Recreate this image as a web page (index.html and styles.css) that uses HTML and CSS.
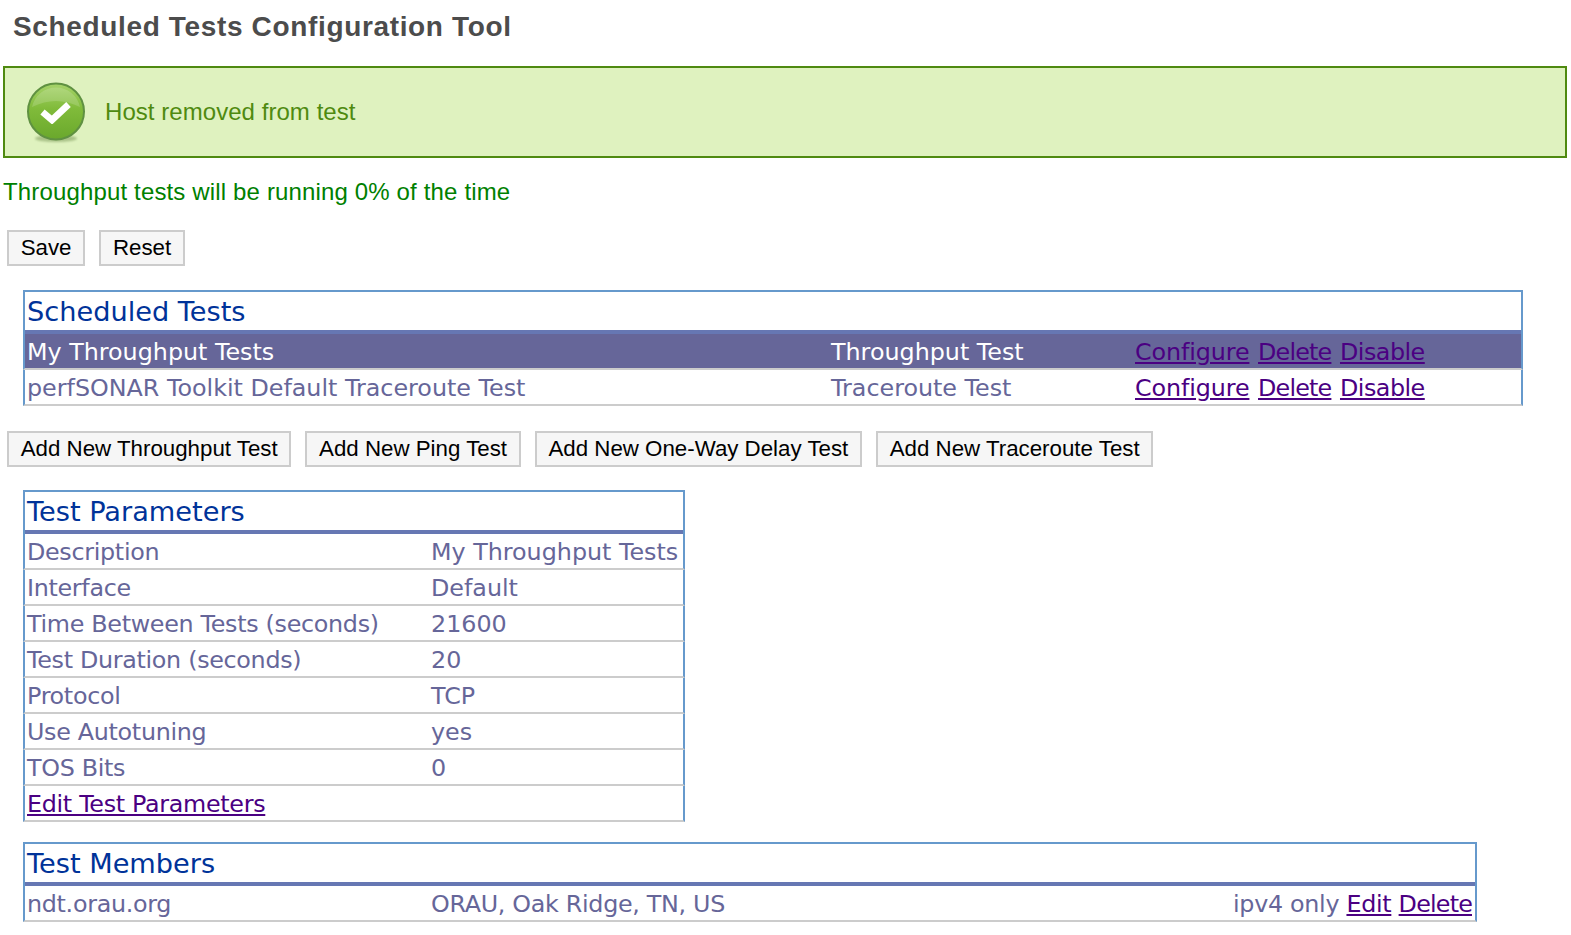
FILE: index.html
```html
<!DOCTYPE html>
<html lang="en">
<head>
<meta charset="utf-8">
<title>Scheduled Tests Configuration Tool</title>
<link rel="stylesheet" href="styles.css">
</head>
<body>
<h1 class="page-title">Scheduled Tests Configuration Tool</h1>
<div class="message">
  <svg class="message-icon" viewBox="0 0 60 62" width="60" height="62" aria-hidden="true">
    <defs>
      <linearGradient id="disc" x1="0" y1="0" x2="0" y2="1">
        <stop offset="0" stop-color="#a6d36a"/>
        <stop offset="0.45" stop-color="#80bb3a"/>
        <stop offset="1" stop-color="#6aa82c"/>
      </linearGradient>
      <filter id="soft" x="-20%" y="-20%" width="140%" height="140%"><feGaussianBlur stdDeviation="1.2"/></filter>
      <filter id="tiny" x="-20%" y="-20%" width="140%" height="140%"><feGaussianBlur stdDeviation="0.4"/></filter>
    </defs>
    <ellipse cx="30" cy="56.5" rx="21" ry="3.5" fill="#7d9a5a" opacity="0.55" filter="url(#soft)"/>
    <circle cx="30" cy="29.5" r="28" fill="url(#disc)" stroke="#5f9141" stroke-width="2"/>
    <path d="M6 25 A24.5 24.5 0 0 1 54 25 Q30 13 6 25Z" fill="#ffffff" opacity="0.16"/>
    <path d="M16.5 30 L26 38 L42.5 22.5" fill="none" stroke="#ffffff" stroke-width="6.6" filter="url(#tiny)"/>
  </svg>
  <span class="message-text">Host removed from test</span>
</div>
<p class="status">Throughput tests will be running 0% of the time</p>
<div class="buttons buttons-save">
  <button class="btn" type="button">Save</button>
  <button class="btn" type="button">Reset</button>
</div>

<section class="panel panel-scheduled">
  <h2 class="panel-title">Scheduled Tests</h2>
  <div class="row row-tests selected">
    <span>My Throughput Tests</span>
    <span>Throughput Test</span>
    <span class="actions"><a href="#">Configure</a> <a class="link-narrow" href="#">Delete</a> <a class="link-tight" href="#">Disable</a></span>
  </div>
  <div class="row row-tests">
    <span>perfSONAR Toolkit Default Traceroute Test</span>
    <span>Traceroute Test</span>
    <span class="actions"><a href="#">Configure</a> <a class="link-narrow" href="#">Delete</a> <a class="link-tight" href="#">Disable</a></span>
  </div>
</section>

<div class="buttons buttons-add">
  <button class="btn" type="button">Add New Throughput Test</button>
  <button class="btn" type="button">Add New Ping Test</button>
  <button class="btn" type="button">Add New One-Way Delay Test</button>
  <button class="btn" type="button">Add New Traceroute Test</button>
</div>

<section class="panel panel-params">
  <h2 class="panel-title">Test Parameters</h2>
  <div class="row row-params"><span class="label">Description</span><span>My Throughput Tests</span></div>
  <div class="row row-params"><span class="label">Interface</span><span>Default</span></div>
  <div class="row row-params"><span class="label">Time Between Tests (seconds)</span><span>21600</span></div>
  <div class="row row-params"><span class="label">Test Duration (seconds)</span><span>20</span></div>
  <div class="row row-params"><span class="label">Protocol</span><span>TCP</span></div>
  <div class="row row-params"><span class="label">Use Autotuning</span><span>yes</span></div>
  <div class="row row-params"><span class="label">TOS Bits</span><span>0</span></div>
  <div class="row row-params"><span class="label"><a href="#">Edit Test Parameters</a></span></div>
</section>

<section class="panel panel-members">
  <h2 class="panel-title">Test Members</h2>
  <div class="row row-members">
    <span class="label">ndt.orau.org</span>
    <span class="label">ORAU, Oak Ridge, TN, US</span>
    <span class="member-actions">ipv4 only <a href="#">Edit</a> <a class="link-narrow" href="#">Delete</a></span>
  </div>
</section>
</body>
</html>
```

FILE: styles.css
```css
html, body {
  margin: 0;
  padding: 0;
  background: #ffffff;
}
body {
  width: 1571px;
  height: 935px;
  overflow: hidden;
  font-family: "Liberation Sans", Arial, sans-serif;
}
.page-title {
  margin: 0;
  padding: 9px 0 0 13px;
  height: 66px;
  box-sizing: border-box;
  font-size: 28px;
  line-height: 36px;
  font-weight: bold;
  letter-spacing: 0.65px;
  color: #4c4c4c;
}
.message {
  margin: 0 4px 0 3px;
  height: 92px;
  box-sizing: border-box;
  border: 2px solid #4f8a10;
  background: #dff2bf;
  display: flex;
  align-items: center;
  padding-left: 21px;
}
.message-icon {
  flex: none;
  margin-top: 1px;
}
.message-text {
  margin-left: 19px;
  font-size: 24px;
  letter-spacing: 0.05px;
  color: #4f8a10;
}
.status {
  margin: 0;
  padding: 20px 0 0 3px;
  font-size: 24px;
  line-height: 28px;
  letter-spacing: 0.15px;
  color: #008000;
}
.buttons {
  display: flex;
  gap: 14px;
  padding-left: 7px;
}
.buttons-save {
  margin-top: 24px;
}
.buttons-add {
  margin-top: 25px;
}
.btn {
  height: 36px;
  box-sizing: border-box;
  padding: 0 11.7px;
  border: 2px solid #cccccc;
  border-radius: 0;
  background: #f6f6f6;
  color: #000000;
  font-family: "Liberation Sans", Arial, sans-serif;
  font-size: 22.3px;
}
.panel {
  margin-left: 23px;
  box-sizing: border-box;
  border: solid #6699cc;
  border-width: 2px 2px 0 2px;
  font-family: "DejaVu Sans", Verdana, sans-serif;
  font-size: 23.8px;
  color: #666699;
}
.panel-scheduled {
  margin-top: 24px;
  width: 1500px;
}
.panel-params {
  margin-top: 23px;
  width: 662px;
}
.panel-members {
  margin-top: 20px;
  width: 1454px;
}
.panel-title {
  margin: 0;
  height: 42px;
  box-sizing: border-box;
  border-bottom: 4px solid #6677b3;
  padding-left: 2px;
  font-size: 27.2px;
  line-height: 40px;
  font-weight: normal;
  color: #003399;
}
.row {
  display: grid;
  height: 36px;
  box-sizing: border-box;
  border-bottom: 2px solid #cccccc;
  margin: 0 -2px;
  padding: 0 3px 0 2px;
  border-left: 2px solid #6699cc;
  border-right: 2px solid #6699cc;
  line-height: 37px;
  white-space: nowrap;
  align-items: start;
}
.row-tests {
  grid-template-columns: 804px 304px 1fr;
}
.row-params {
  grid-template-columns: 404px 1fr;
}
.row-members {
  grid-template-columns: 404px 1fr auto;
}
.label {
  letter-spacing: -0.3px;
}
.selected {
  background: #666699;
  color: #ffffff;
}
a {
  color: #4b0082;
  text-decoration: underline;
}
.actions {
  word-spacing: 1px;
}
.actions a {
  letter-spacing: -0.1px;
}
.actions .link-narrow,
.member-actions .link-narrow {
  letter-spacing: -0.8px;
}
.actions .link-tight {
  letter-spacing: -0.5px;
}
.member-actions {
  letter-spacing: -0.3px;
}
```
